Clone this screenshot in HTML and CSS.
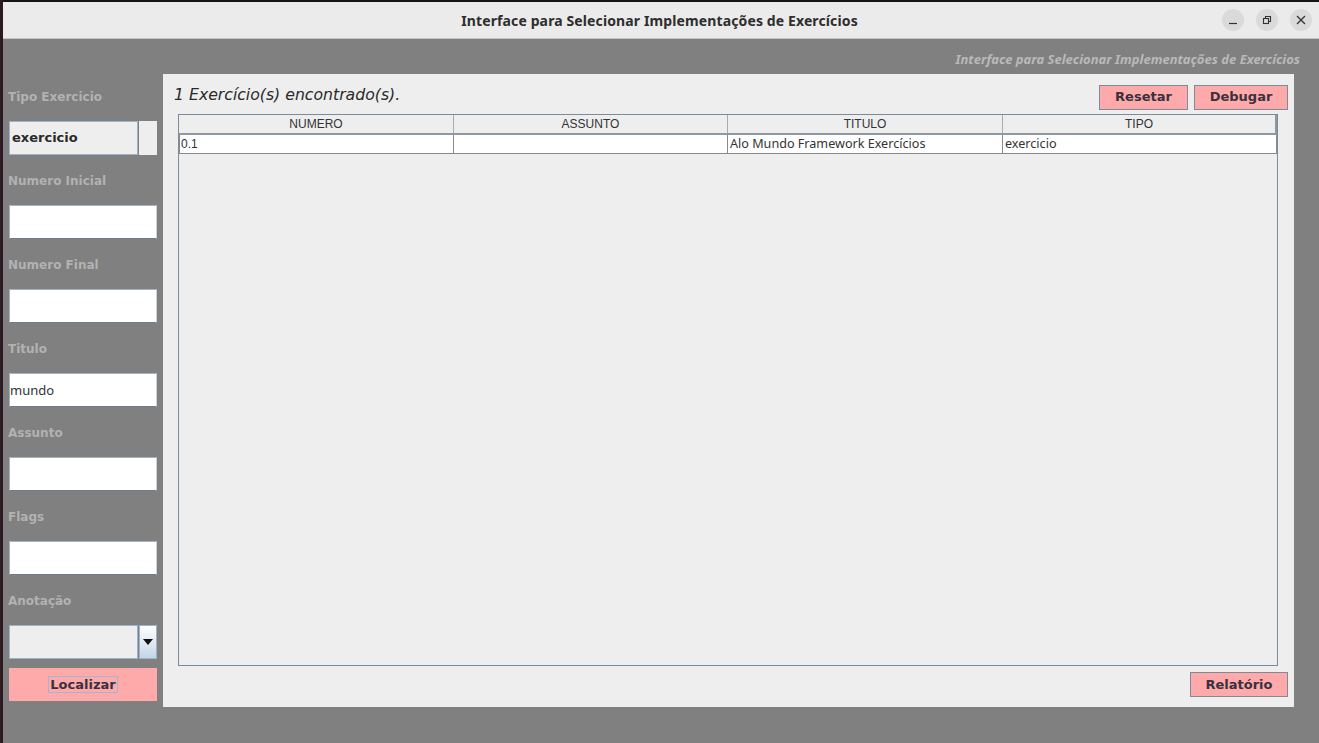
FILE: index.html
```html
<!DOCTYPE html>
<html lang="pt">
<head>
<meta charset="utf-8">
<title>Interface para Selecionar Implementações de Exercícios</title>
<link rel="stylesheet" href="styles.css">
</head>
<body>
<div class="window">
  <header class="titlebar">
    <div class="title">Interface para Selecionar Implementações de Exercícios</div>
    <div class="wm-buttons">
      <span class="wm-btn"><svg width="10" height="10" viewBox="0 0 10 10"><path d="M1 8.5H9" stroke="#333" stroke-width="1.2"/></svg></span>
      <span class="wm-btn"><svg width="10" height="10" viewBox="0 0 10 10"><rect x="1.5" y="3.5" width="5" height="5" fill="none" stroke="#333" stroke-width="1.1"/><path d="M3.5 3.5V1.5H8.5V6.5H6.5" fill="none" stroke="#333" stroke-width="1.1"/></svg></span>
      <span class="wm-btn"><svg width="10" height="10" viewBox="0 0 10 10"><path d="M1 1L9 9M9 1L1 9" stroke="#333" stroke-width="1.3"/></svg></span>
    </div>
  </header>
  <div class="subtitle">Interface para Selecionar Implementações de Exercícios</div>
  <div class="body">
    <aside class="sidebar">
      <div class="label">Tipo Exercicio</div>
      <div class="combo"><div class="combo-field bold">exercicio</div><div class="combo-side"></div></div>
      <div class="label">Numero Inicial</div>
      <div class="field"></div>
      <div class="label">Numero Final</div>
      <div class="field"></div>
      <div class="label">Titulo</div>
      <div class="field">mundo</div>
      <div class="label">Assunto</div>
      <div class="field"></div>
      <div class="label">Flags</div>
      <div class="field"></div>
      <div class="label">Anotação</div>
      <div class="combo"><div class="combo-field"></div><div class="combo-arrow"><svg width="10" height="6" viewBox="0 0 10 6"><path d="M0 0H10L5 6Z" fill="#111"/></svg></div></div>
      <button class="btn btn-wide"><span class="focus">Localizar</span></button>
    </aside>
    <main class="panel">
      <div class="toprow">
        <div class="count">1 Exercício(s) encontrado(s).</div>
        <div class="actions">
          <button class="btn btn-reset">Resetar</button>
          <button class="btn btn-debug">Debugar</button>
        </div>
      </div>
      <div class="table">
        <div class="thead">
          <div class="th">NUMERO</div>
          <div class="th">ASSUNTO</div>
          <div class="th">TITULO</div>
          <div class="th">TIPO</div>
        </div>
        <div class="tr">
          <div class="td num">0.1</div>
          <div class="td"></div>
          <div class="td">Alo Mundo Framework Exercícios</div>
          <div class="td">exercicio</div>
        </div>
      </div>
      <div class="bottomrow">
        <button class="btn btn-report">Relatório</button>
      </div>
    </main>
  </div>
</div>
</body>
</html>
```
FILE: styles.css
```css
* { box-sizing: border-box; }
html, body { margin: 0; padding: 0; }
body {
  width: 1319px;
  height: 743px;
  overflow: hidden;
  background: #808080;
  font-family: "DejaVu Sans", "Noto Sans", sans-serif;
}
.window {
  width: 1319px;
  height: 743px;
  border-left: 3px solid #2b1a22;
  display: flex;
  flex-direction: column;
}
.titlebar {
  height: 39px;
  background: #ebebeb;
  border-top: 2px solid #141414;
  border-bottom: 1px solid #c4c4c4;
  position: relative;
  display: flex;
  align-items: center;
  justify-content: center;
}
.title {
  font-family: "Noto Sans", sans-serif;
  font-weight: bold;
  font-size: 14px;
  letter-spacing: 0.12px;
  color: #2e2e2e;
  margin-left: -3px;
}
.wm-buttons {
  position: absolute;
  right: 7px;
  top: 7px;
  display: flex;
  gap: 12px;
}
.wm-btn {
  width: 22px;
  height: 22px;
  border-radius: 50%;
  background: #dadada;
  display: flex;
  align-items: center;
  justify-content: center;
}
.subtitle {
  height: 32px;
  text-align: right;
  padding-right: 19px;
  padding-top: 12px;
  font-family: "Noto Sans", sans-serif;
  font-style: italic;
  font-weight: bold;
  font-size: 13px;
  color: #b9b9b9;
  line-height: 16px;
}
.body {
  display: flex;
  align-items: flex-start;
}
.sidebar {
  width: 160px;
  padding-left: 6px;
  display: flex;
  flex-direction: column;
}
.label {
  height: 50px;
  line-height: 52px;
  margin-left: -1px;
  font-weight: bold;
  font-size: 12px;
  color: #b2b2b2;
}
.field {
  width: 148px;
  height: 34px;
  background: #fff;
  border: 1px solid #a6b2bd;
  border-right-color: #c8d0d8;
  border-bottom-color: #6f7d8a;
  font-family: "Noto Sans", sans-serif;
  font-size: 13px;
  color: #333;
  line-height: 32px;
  padding-left: 0;
}
.combo {
  width: 148px;
  height: 34px;
  display: flex;
  gap: 1px;
}
.combo-field {
  width: 129px;
  height: 34px;
  background: #eeeeee;
  border: 1px solid #9bb4cc;
  font-size: 13px;
  color: #2a2a2a;
  line-height: 32px;
  padding-left: 2px;
}
.bold { font-weight: bold; }
.combo-side {
  width: 18px;
  height: 34px;
  background: #eeeeee;
}
.combo-arrow {
  width: 18px;
  height: 34px;
  border: 1px solid #9bb4cc;
  background: linear-gradient(#ffffff, #c4d5e6);
  display: flex;
  align-items: center;
  justify-content: center;
}
.btn {
  background: #ffaaaa;
  border: 1px solid #7b8b99;
  font-family: "DejaVu Sans", sans-serif;
  font-weight: bold;
  font-size: 13px;
  color: #3a3140;
  padding: 0;
  margin: 0;
}
.btn-wide {
  width: 148px;
  height: 33px;
  margin-top: 9px;
  border: none;
}
.focus {
  border: 1px solid #9bb8d6;
  padding: 0 1px;
}
.panel {
  width: 1131px;
  height: 633px;
  margin-top: 3px;
  background: #eeeeee;
  display: flex;
  flex-direction: column;
}
.toprow {
  display: flex;
  justify-content: space-between;
  align-items: center;
  height: 26px;
  margin-top: 10px;
  padding-left: 11px;
  padding-right: 6px;
}
.count {
  font-style: italic;
  font-size: 15.7px;
  color: #2a2a2a;
  margin-top: -5px;
}
.actions {
  display: flex;
  gap: 6px;
}
.btn-reset { width: 89px; height: 25px; line-height: 22px; }
.btn-debug { width: 94px; height: 25px; line-height: 22px; }
.table {
  flex: 1;
  margin: 4px 16px 0 15px;
  border: 1px solid #7b8b99;
  background: #eeeeee;
}
.thead, .tr {
  display: grid;
  grid-template-columns: 275px 274px 275px 274px;
}
.thead {
  height: 20px;
  border-bottom: 2px solid #8d98a3;
}
.th {
  font-family: "Liberation Sans", Arial, sans-serif;
  font-size: 12px;
  color: #333;
  text-align: center;
  line-height: 18px;
  border-right: 1px solid #a3acb4;
}
.th:last-child { border-right: 2px solid #8d98a3; }
.tr {
  height: 19px;
  background: #fff;
  border-bottom: 1px solid #8a8a8a;
}
.td {
  font-family: "Noto Sans", sans-serif;
  font-size: 12.6px;
  color: #333;
  line-height: 18px;
  padding-left: 1px;
  border-right: 1px solid #8a8a8a;
  border-left: 1px solid transparent;
}
.td.num {
  font-family: "Liberation Sans", Arial, sans-serif;
  font-size: 12px;
}
.td:first-child { border-left: 1px solid #8a8a8a; }
.bottomrow {
  display: flex;
  justify-content: flex-end;
  padding-right: 6px;
  margin-top: 6px;
  margin-bottom: 10px;
}
.btn-report { width: 98px; height: 25px; }
```
